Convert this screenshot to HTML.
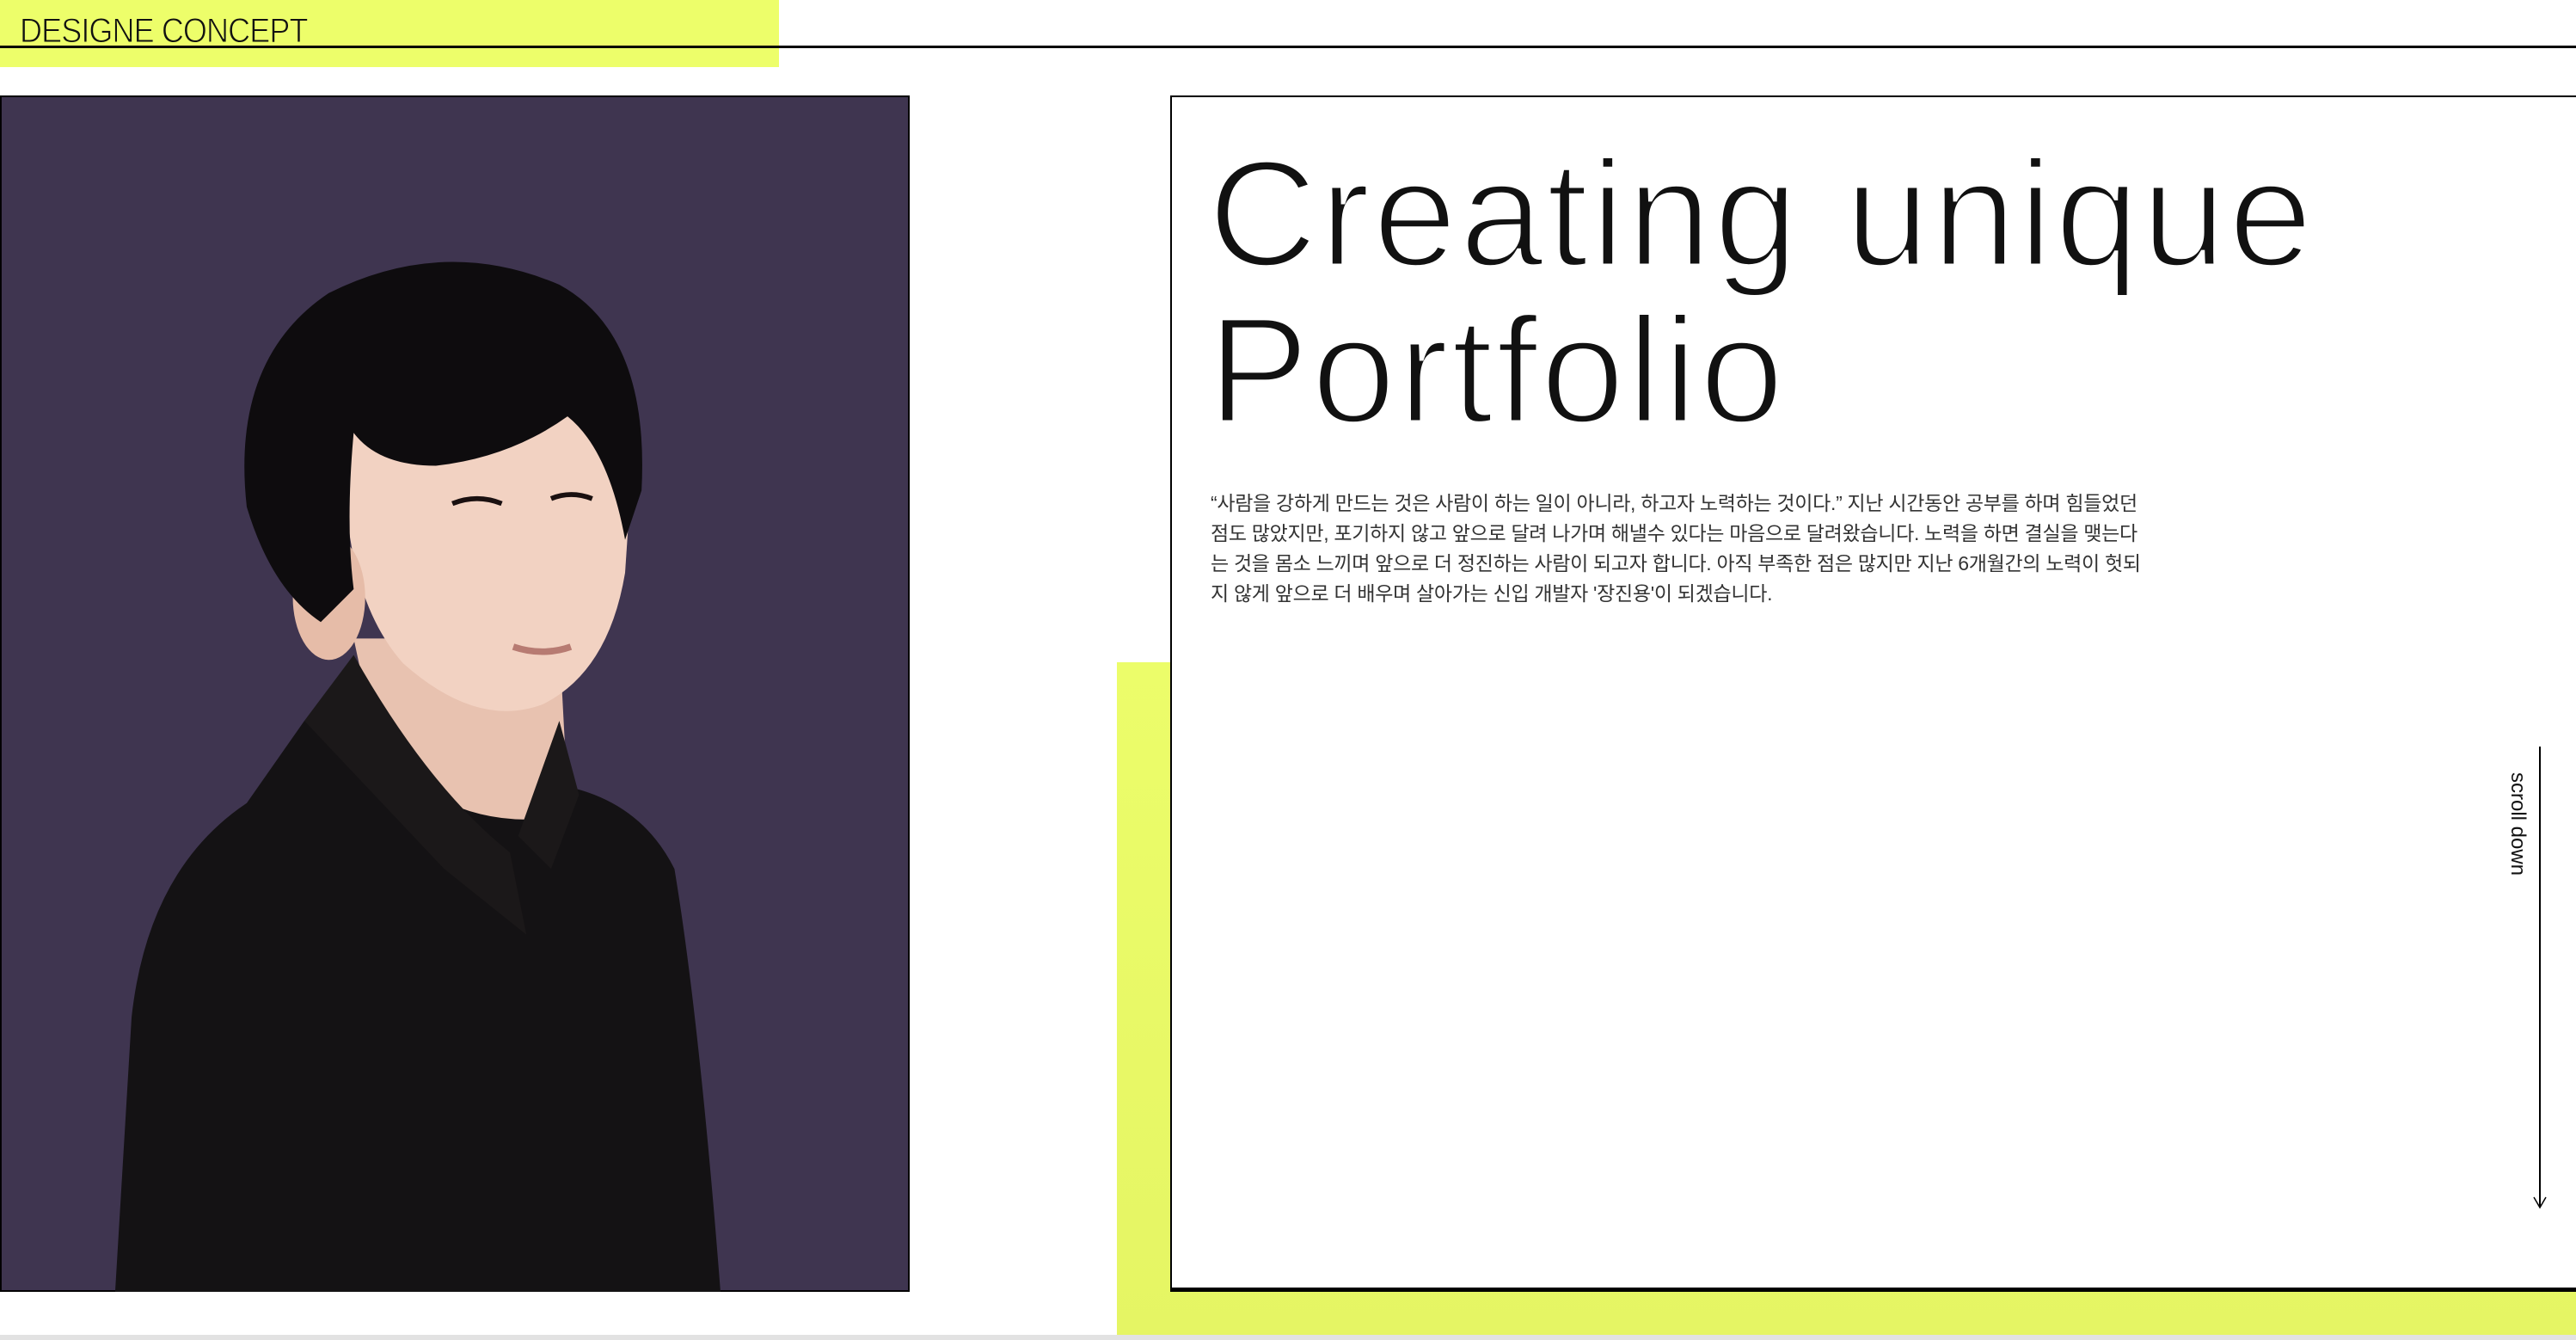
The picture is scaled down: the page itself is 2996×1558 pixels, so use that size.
<!DOCTYPE html>
<html><head><meta charset="utf-8"><style>
*{margin:0;padding:0;box-sizing:border-box}
body{width:2996px;height:1558px;overflow:hidden;background:#fff;position:relative;font-family:"Liberation Sans","Noto Sans CJK KR",sans-serif}
.a{position:absolute}
</style></head><body>
<div class="a" style="left:0;top:0;width:906px;height:78px;background:#edfe6a"></div>
<div class="a" style="left:0;top:53px;width:2996px;height:3px;background:#000"></div>
<div class="a" style="left:23px;top:15px;font-size:40px;line-height:42px;color:#111;transform:scaleX(0.9);transform-origin:left;letter-spacing:-1px;-webkit-text-stroke:1px #edfe6a">DESIGNE CONCEPT</div>

<div class="a" style="left:1299px;top:770px;width:1697px;height:782px;background:linear-gradient(180deg,#ecfd6a,#e5f564)"></div>
<div class="a" style="left:0;top:1552px;width:2996px;height:6px;background:#e2e2e2"></div>

<div class="a" style="left:1361px;top:111px;width:1635px;height:1391px;background:#fff;border:2px solid #000;border-bottom:5px solid #000;border-right:none"></div>
<div class="a" style="left:1405px;top:158px;font-size:176px;line-height:182px;color:#111;letter-spacing:3px;-webkit-text-stroke:5px #fff">Creating unique<br>Portfolio</div>
<div class="a" style="left:1408px;top:568px;width:1098px;font-size:23px;line-height:35px;color:#333;letter-spacing:-0.3px">“사람을 강하게 만드는 것은 사람이 하는 일이 아니라, 하고자 노력하는 것이다.” 지난 시간동안 공부를 하며 힘들었던 점도 많았지만, 포기하지 않고 앞으로 달려 나가며 해낼수 있다는 마음으로 달려왔습니다. 노력을 하면 결실을 맺는다는 것을 몸소 느끼며 앞으로 더 정진하는 사람이 되고자 합니다. 아직 부족한 점은 많지만 지난 6개월간의 노력이 헛되지 않게 앞으로 더 배우며 살아가는 신입 개발자 '장진용'이 되겠습니다.</div>
<div class="a" style="left:2912px;top:898px;width:32px;height:130px;"><div style="position:absolute;left:30px;top:0;transform:rotate(90deg);transform-origin:left top;font-size:24px;white-space:nowrap;color:#111;line-height:28px">scroll down</div></div>
<div class="a" style="left:2953px;top:868px;width:2px;height:536px;background:#000"></div>
<svg class="a" style="left:2945px;top:1390px" width="18" height="16"><path d="M2 2 L9 14 L16 2" fill="none" stroke="#000" stroke-width="1.5"/></svg>

<svg class="a" style="left:0;top:111px" width="1058" height="1391" viewBox="0 0 553 727" preserveAspectRatio="none">
<rect x="0" y="0" width="553" height="727" fill="#3f3550" stroke="#000" stroke-width="2"/>
<path d="M70 727 L80 560 Q90 470 150 430 L185 380 Q230 390 260 420 L330 440 L345 420 Q390 430 410 470 Q425 560 438 727 Z" fill="#141214"/>
<path d="M215 330 L230 400 Q270 440 320 440 L345 425 L340 330 Z" fill="#e8c2b0"/>
<path d="M185 380 L215 340 Q260 420 310 460 L320 510 L270 470 Z" fill="#1b1819"/>
<path d="M340 380 L352 425 L335 470 L315 450 Z" fill="#1b1819"/>
<path d="M210 200 Q205 300 245 345 Q290 385 330 370 Q370 350 380 290 L385 215 Q330 170 210 200 Z" fill="#f2d2c2"/>
<ellipse cx="200" cy="305" rx="22" ry="38" fill="#e6bca8"/>
<path d="M150 250 Q140 160 200 120 Q270 85 340 115 Q395 145 390 240 L380 270 Q370 215 345 195 Q310 220 265 225 Q230 225 215 205 Q210 260 215 300 L195 320 Q165 300 150 250 Z" fill="#0e0c0e"/>
<path d="M275 248 q15 -6 30 0" stroke="#1a1010" stroke-width="3" fill="none"/>
<path d="M335 245 q12 -5 25 0" stroke="#1a1010" stroke-width="3" fill="none"/>
<path d="M312 335 q18 6 35 0" stroke="#b77b72" stroke-width="4" fill="none"/>
</svg>
</body></html>
